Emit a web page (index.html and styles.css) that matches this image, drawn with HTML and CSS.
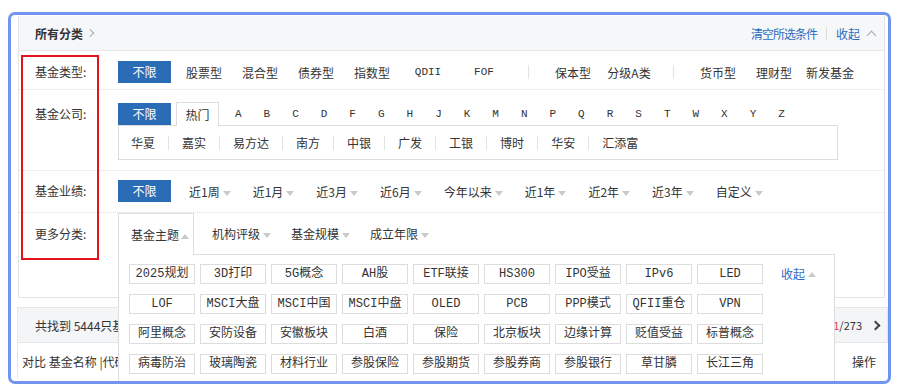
FILE: index.html
```html
<!DOCTYPE html>
<html>
<head>
    <meta charset="utf-8">
    <title>基金筛选</title>
    <link rel="stylesheet" href="styles.css">
</head>
<body>
    <div class="frame">
        <div class="filter">
            <div class="filter-head">
                <span class="all">所有分类<i class="chev-right"></i></span>
                <span class="head-links">
                    <a>清空所选条件</a>
                    <span class="bar"></span>
                    <a>收起</a>
                    <i class="chev-up"></i>
                </span>
            </div>

            <div class="row row-type">
                <div class="label">基金类型:</div>
                <div class="opts">
                    <span class="any">不限</span>
                    <span class="type first">股票型</span>
                    <span class="type">混合型</span>
                    <span class="type">债券型</span>
                    <span class="type">指数型</span>
                    <span class="type latin">QDII</span>
                    <span class="type latin">FOF</span>
                    <span class="vsep"><i></i></span>
                    <span class="type">保本型</span>
                    <span class="type">分级A类</span>
                    <span class="vsep"><i></i></span>
                    <span class="type">货币型</span>
                    <span class="type">理财型</span>
                    <span class="type">新发基金</span>
                </div>
            </div>

            <div class="row row-company">
                <div class="label">基金公司:</div>
                <div class="company">
                    <div class="strip">
                        <span class="any">不限</span>
                        <span class="hot">热门</span>
                        <div class="letters">
                            <span>A</span><span>B</span><span>C</span><span>D</span><span>F</span>
                            <span>G</span><span>H</span><span>J</span><span>K</span><span>M</span>
                            <span>N</span><span>P</span><span>Q</span><span>R</span><span>S</span>
                            <span>T</span><span>W</span><span>X</span><span>Y</span><span>Z</span>
                        </div>
                    </div>
                    <div class="company-box">
                        <span>华夏</span>
                        <span>嘉实</span>
                        <span>易方达</span>
                        <span>南方</span>
                        <span>中银</span>
                        <span>广发</span>
                        <span>工银</span>
                        <span>博时</span>
                        <span>华安</span>
                        <span>汇添富</span>
                    </div>
                </div>
            </div>

            <div class="row row-perf">
                <div class="label">基金业绩:</div>
                <div class="opts">
                    <span class="any">不限</span>
                    <div class="perf">
                        <span>近1周<i class="caret"></i></span>
                        <span>近1月<i class="caret"></i></span>
                        <span>近3月<i class="caret"></i></span>
                        <span>近6月<i class="caret"></i></span>
                        <span>今年以来<i class="caret"></i></span>
                        <span>近1年<i class="caret"></i></span>
                        <span>近2年<i class="caret"></i></span>
                        <span>近3年<i class="caret"></i></span>
                        <span>自定义<i class="caret"></i></span>
                    </div>
                </div>
            </div>

            <div class="row row-more">
                <div class="label">更多分类:</div>
                <div class="more">
                    <div class="tabs">
                        <span class="tab active">基金主题<i class="caret up"></i></span>
                        <div class="tab-rest">
                            <span class="tab">机构评级<i class="caret"></i></span>
                            <span class="tab">基金规模<i class="caret"></i></span>
                            <span class="tab">成立年限<i class="caret"></i></span>
                        </div>
                    </div>
                    <div class="theme-panel">
                        <div class="tags">
                            <span>2025规划</span>
                            <span>3D打印</span>
                            <span>5G概念</span>
                            <span>AH股</span>
                            <span>ETF联接</span>
                            <span>HS300</span>
                            <span>IPO受益</span>
                            <span>IPv6</span>
                            <span>LED</span>
                            <span>LOF</span>
                            <span>MSCI大盘</span>
                            <span>MSCI中国</span>
                            <span>MSCI中盘</span>
                            <span>OLED</span>
                            <span>PCB</span>
                            <span>PPP模式</span>
                            <span>QFII重仓</span>
                            <span>VPN</span>
                            <span>阿里概念</span>
                            <span>安防设备</span>
                            <span>安徽板块</span>
                            <span>白酒</span>
                            <span>保险</span>
                            <span>北京板块</span>
                            <span>边缘计算</span>
                            <span>贬值受益</span>
                            <span>标普概念</span>
                            <span>病毒防治</span>
                            <span>玻璃陶瓷</span>
                            <span>材料行业</span>
                            <span>参股保险</span>
                            <span>参股期货</span>
                            <span>参股券商</span>
                            <span>参股银行</span>
                            <span>草甘膦</span>
                            <span>长江三角</span>
                        </div>
                        <a class="fold">收起<i class="caret up"></i></a>
                    </div>
                </div>
            </div>

            <div class="mark"></div>
        </div>

        <div class="results">
            <div class="res-bar">
                <span>共找到 5444只基金</span>
                <span class="pager"><em>1</em>/273<i class="chev-right dark"></i></span>
            </div>
            <div class="res-head">
                <span>对比 基金名称 |代码</span>
                <span>操作</span>
            </div>
        </div>
    </div>
</body>
</html>
```

FILE: styles.css
```css
* {
    box-sizing: border-box;
}
body {
    margin: 0;
    font-family: "Noto Sans CJK SC", "Liberation Sans", sans-serif;
    font-size: 12px;
    color: #333;
    background: #fff;
}
a {
    color: #2a6bc0;
    cursor: pointer;
}
i {
    font-style: normal;
}

.frame {
    width: 883px;
    height: 372px;
    margin: 12px 0 0 8px;
    padding: 1px 3px 0 7px;
    border: 3px solid #7195ee;
    border-radius: 7px;
    overflow: hidden;
}

/* filter box */
.filter {
    position: relative;
    border: 1px solid #e4e4e4;
    border-top: 0;
}
.filter-head {
    height: 35px;
    display: flex;
    align-items: center;
    justify-content: space-between;
    padding: 0 9px 0 16px;
    background: #f6f7f9;
    border-bottom: 1px solid #e6e6e6;
}
.all {
    font-weight: bold;
    display: flex;
    align-items: center;
}
.chev-right {
    display: inline-block;
    width: 6px;
    height: 6px;
    margin-left: 4px;
    border-top: 1px solid #aaa;
    border-right: 1px solid #aaa;
    transform: rotate(45deg);
}
.chev-right.dark {
    width: 7px;
    height: 7px;
    margin-left: 10px;
    border-width: 2px;
    border-color: #444;
}
.head-links {
    display: flex;
    align-items: center;
}
.head-links a:first-child {
    letter-spacing: -1px;
}
.head-links .bar {
    width: 1px;
    height: 13px;
    margin: 0 9px;
    background: #ddd;
}
.chev-up {
    display: inline-block;
    width: 7px;
    height: 7px;
    margin: 4px 0 0 8px;
    border-top: 1px solid #aaa;
    border-left: 1px solid #aaa;
    transform: rotate(45deg);
}

.row {
    display: flex;
    border-bottom: 1px dotted #e0e0e0;
}
.label {
    width: 99px;
    flex-shrink: 0;
    padding-left: 16px;
    line-height: 22px;
}
.opts {
    display: flex;
    align-items: center;
}
.any {
    display: inline-block;
    width: 53px;
    height: 22px;
    line-height: 22px;
    text-align: center;
    color: #fff;
    background: #2b6cb6;
}

/* type row */
.row-type {
    padding: 10px 0 6px;
}
.type {
    width: 56px;
    text-align: center;
}
.type.first {
    margin-left: 5px;
}
.latin,
.letters span {
    font-family: "Liberation Mono", monospace;
    font-size: 11px;
}
.vsep {
    width: 33px;
    display: flex;
    justify-content: center;
}
.vsep i {
    width: 1px;
    height: 14px;
    background: #e2e2e2;
}

/* company row */
.row-company {
    padding: 12px 0 10px;
}
.row-company .label {
    line-height: 24px;
}
.strip {
    display: flex;
    align-items: center;
    height: 24px;
}
.hot {
    position: relative;
    z-index: 1;
    width: 43px;
    height: 24px;
    margin: 0 5px;
    line-height: 23px;
    text-align: center;
    background: #fff;
    border: 1px solid #ddd;
    border-bottom: 0;
    align-self: flex-start;
}
.letters {
    display: flex;
}
.letters span {
    width: 28.6px;
    text-align: center;
}
.company-box {
    width: 720px;
    height: 35px;
    margin-top: -1px;
    display: flex;
    align-items: center;
    border: 1px solid #ddd;
}
.company-box span {
    padding: 0 13px;
    line-height: 14px;
    border-left: 1px solid #e2e2e2;
}
.company-box span:first-child {
    padding-left: 12px;
    border-left: 0;
}

/* performance row */
.row-perf {
    padding: 9px 0 10px;
}
.perf {
    display: flex;
    padding-left: 7px;
}
.perf span {
    padding: 0 11px;
}
.caret {
    display: inline-block;
    margin-left: 3px;
    vertical-align: middle;
    border-left: 4px solid transparent;
    border-right: 4px solid transparent;
    border-top: 5px solid #cacaca;
}
.caret.up {
    border-top: 0;
    border-bottom: 5px solid #cacaca;
}

/* more row */
.row-more {
    height: 84px;
    border-bottom: 0;
}
.row-more .label {
    line-height: 41px;
}
.more {
    position: relative;
}
.tabs {
    display: flex;
    align-items: center;
    height: 41px;
}
.tab-rest {
    display: flex;
    padding-left: 8px;
}
.tab {
    padding: 0 10px;
}
.tab.active {
    position: relative;
    z-index: 2;
    height: 42px;
    line-height: 41px;
    padding: 0 4px 0 12px;
    margin-top: 1px;
    background: #fff;
    border: 1px solid #ddd;
    border-bottom: 0;
}
.tab.active .caret {
    margin-left: 2px;
}
.theme-panel {
    position: absolute;
    z-index: 1;
    top: 41px;
    left: 0;
    width: 717px;
    height: 150px;
    display: flex;
    align-items: flex-start;
    padding: 9px 0 0 10px;
    background: #fff;
    border: 1px solid #ddd;
}
.tags {
    display: grid;
    grid-template-columns: repeat(9, 66px);
    gap: 10px 5px;
}
.tags span {
    height: 20px;
    line-height: 18px;
    text-align: center;
    font-family: "Liberation Mono", "Noto Sans CJK SC", monospace;
    border: 1px solid #ddd;
    white-space: nowrap;
}
.fold {
    margin-left: 18px;
    line-height: 20px;
}
.fold .caret {
    margin-top: -2px;
}

/* annotation box */
.mark {
    position: absolute;
    left: 2px;
    top: 39px;
    width: 78px;
    height: 205px;
    border: 2px solid #e3141c;
}

/* results */
.results {
    margin: 9px -3px 0 -1px;
}
.res-bar {
    height: 36px;
    display: flex;
    align-items: center;
    justify-content: space-between;
    padding: 0 8px 0 17px;
    background: #f4f5f7;
    border: 1px solid #e6e6e6;
}
.pager {
    display: flex;
    align-items: center;
    font-size: 11px;
}
.pager em {
    font-style: normal;
    color: #e4393c;
}
.res-head {
    height: 36px;
    display: flex;
    align-items: center;
    justify-content: space-between;
    padding: 0 12px 0 4px;
    border-left: 1px solid #e6e6e6;
}
```
